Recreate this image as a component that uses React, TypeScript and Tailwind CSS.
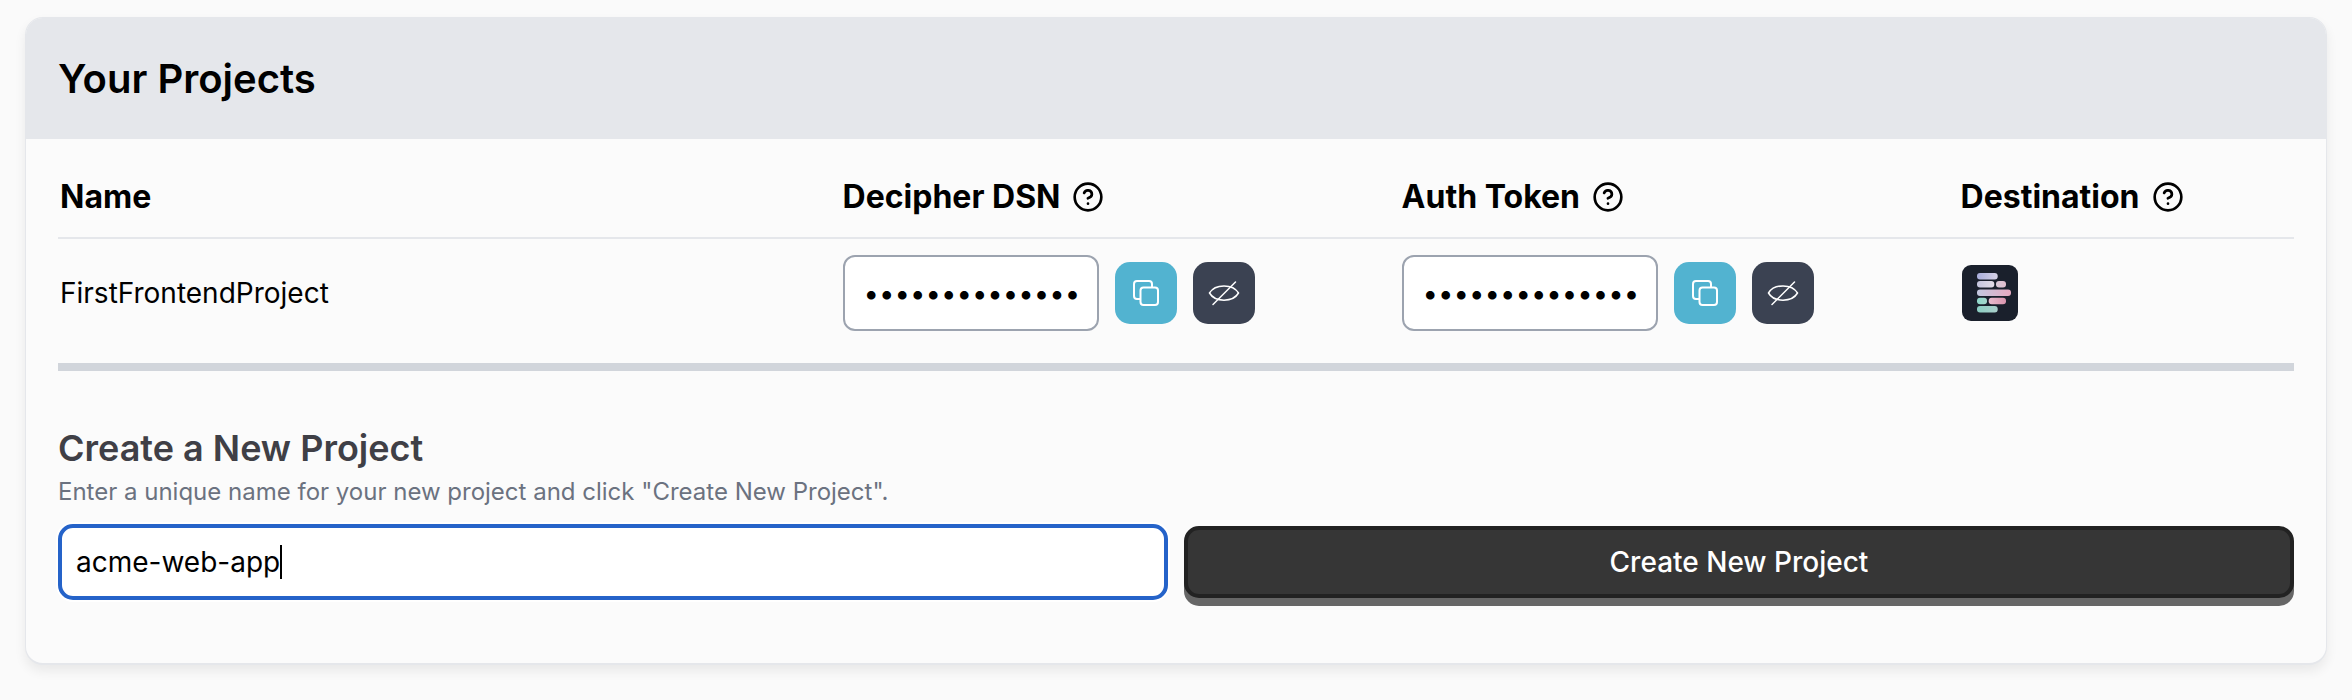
import { CircleHelp } from "lucide-react";

function Help() {
  return <CircleHelp size={32} strokeWidth={2} className="text-black" />;
}

function CopyIcon() {
  return (
    <svg width="26" height="26" viewBox="0 0 26 26" fill="none" stroke="white" strokeWidth="2">
      <rect x="7.5" y="7.5" width="17.5" height="17.5" rx="3" />
      <path d="M7.5 19H4a3 3 0 0 1-3-3V4a3 3 0 0 1 3-3h12a3 3 0 0 1 3 3v3.5" />
    </svg>
  );
}

function EyeOff() {
  return (
    <svg width="32" height="32" viewBox="0 0 32 32" fill="none" stroke="white" strokeWidth="1.5" strokeLinecap="round">
      <path d="M1.5 16C7 6.5 25 6.5 30.5 16C25 25.5 7 25.5 1.5 16Z" />
      <path d="M5 27.5L27.5 5" />
    </svg>
  );
}

// each bar has its own colour run, the logo shifts from lilac through pink to teal
const logoBars = [
  { id: "b1", x: 15, y: 8.1, w: 20.7, from: "#a9aedc", to: "#d6d2e6" },
  { id: "b2", x: 15, y: 16.1, w: 17.3, from: "#c4c5de", to: "#e2dce6" },
  { id: "b3", x: 34, y: 16.1, w: 10, from: "#d8cad8", to: "#e0bccc" },
  { id: "b4", x: 15, y: 24.5, w: 34, from: "#c3c8e0", to: "#e6a9c0" },
  { id: "b5", x: 15, y: 32.8, w: 10, from: "#8fd8ca", to: "#a5d6cc" },
  { id: "b6", x: 26.7, y: 32.8, w: 17.3, from: "#e8bccd", to: "#d994ae" },
  { id: "b7", x: 15, y: 41.1, w: 20.7, from: "#8bcfc3", to: "#abcfcb" },
];

function Logo() {
  return (
    <div className="pl-0.5">
      <div className="ml-px w-14 h-14 rounded-[9px] bg-[#1a202c] flex items-center justify-center">
        <svg width="56" height="56" viewBox="0 0 56 56">
          <defs>
            {logoBars.map((b) => (
              <linearGradient key={b.id} id={b.id}>
                <stop offset="0" stopColor={b.from} />
                <stop offset="1" stopColor={b.to} />
              </linearGradient>
            ))}
          </defs>
          {logoBars.map((b) => (
            <rect key={b.id} x={b.x} y={b.y} width={b.w} height="6.4" rx="3" fill={`url(#${b.id})`} />
          ))}
        </svg>
      </div>
    </div>
  );
}

function SecretCell() {
  return (
    <div className="flex items-center gap-4">
      <input
        type="password"
        readOnly
        value="abcdefghijklmn"
        className="w-64 h-[76px] bg-white border-2 border-[#9ca3af] rounded-xl px-[19px] text-[27.5px] outline-none"
      />
      <button className="w-[62px] h-[62px] rounded-[15px] bg-[#52b3d0] flex items-center justify-center">
        <CopyIcon />
      </button>
      <button className="w-[62px] h-[62px] rounded-[15px] bg-[#3b4252] flex items-center justify-center">
        <EyeOff />
      </button>
    </div>
  );
}

export default function App() {
  return (
    <div className="min-h-[700px] bg-[#fafafa] px-[25px] pt-[17px] font-['Inter',sans-serif]">
      <div className="h-[648px] rounded-[18px] border border-b-2 border-[#e5e7eb] bg-[#fbfbfb] shadow-[0_6px_12px_rgba(0,0,0,0.07)] overflow-hidden">
        <div className="h-[121px] bg-[#e5e7eb] px-8 flex items-center">
          <h2 className="text-[40px] font-semibold text-black">Your Projects</h2>
        </div>
        <div className="px-8">
          <div className="grid grid-cols-[35%_25%_25%_15%] h-[100px] pt-[17px] items-center border-b-2 border-[#e5e7eb] [&>*]:pl-0.5 text-[32px] font-bold text-black">
            <div>Name</div>
            <div className="flex items-center gap-3">Decipher DSN <Help /></div>
            <div className="flex items-center gap-3">Auth Token <Help /></div>
            <div className="flex items-center gap-3">Destination <Help /></div>
          </div>
          <div className="grid grid-cols-[35%_25%_25%_15%] h-[132px] pb-4 items-center border-b-8 border-[#d1d5db] text-[28px] text-black">
            <div className="pl-0.5">FirstFrontendProject</div>
            <div className="pl-0.5"><SecretCell /></div>
            <div className="pl-0.5"><SecretCell /></div>
            <Logo />
          </div>
          <h3 className="mt-[53px] text-[36px] leading-[48px] font-semibold text-[#3f3f46]">Create a New Project</h3>
          <p className="mt-1 text-[24px] leading-[32px] text-[#6b7280]">Enter a unique name for your new project and click "Create New Project".</p>
          <div className="grid grid-cols-2 gap-4 mt-4">
            <div className="h-[76px] bg-white border-4 border-[#2563c9] rounded-[15px] shadow-[0_0_0_2px_#ffffff] px-[14px] flex items-center text-[28px] text-black">
              acme-web-app<span className="inline-block w-[2px] h-[34px] bg-black" />
            </div>
            <button className="h-[72px] mt-[2px] bg-[#363636] border-4 border-[#222222] rounded-[15px] shadow-[0_8px_0_#666666] text-[28px] font-medium text-white">
              Create New Project
            </button>
          </div>
        </div>
      </div>
    </div>
  );
}
